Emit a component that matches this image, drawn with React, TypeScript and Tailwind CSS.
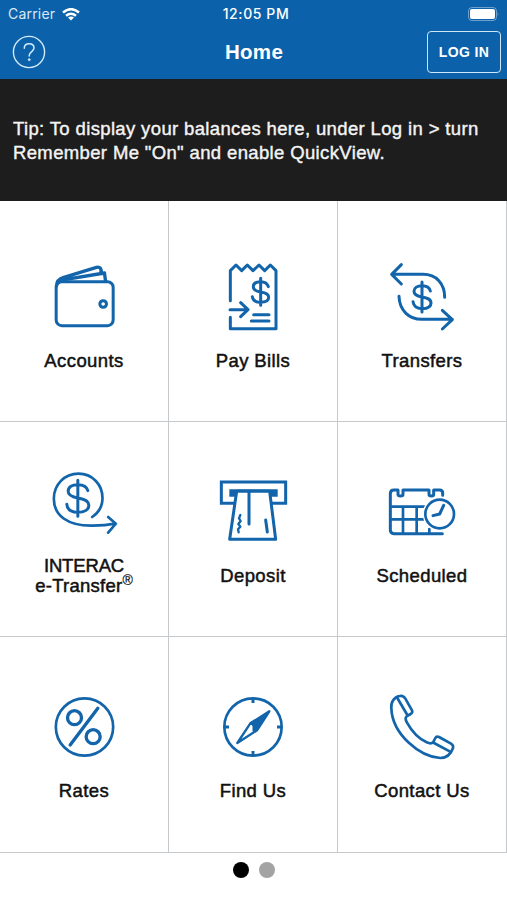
import type { ReactNode } from 'react';

const helv = "font-['Liberation_Sans',Arial,sans-serif]";

function Icon({ box, children }: { box: string; children: ReactNode }) {
  return (
    <svg
      viewBox={box}
      className="block h-20 w-20 shrink-0"
      fill="none"
      stroke="#1264ab"
      strokeWidth="9"
      strokeLinecap="round"
      strokeLinejoin="round"
      aria-hidden="true"
    >
      {children}
    </svg>
  );
}

function Wallet() {
  return (
    <Icon box="42.5 6 240 240">
      <rect x="79" y="80" width="171" height="132" rx="17" />
      <circle cx="220" cy="147" r="10" />
      <path d="M80 93C80 79 88 71 102 67L200 37C210 34 216 41 213 52M90 76L224 54L227 78" strokeWidth="10" />
    </Icon>
  );
}

function Bill() {
  return (
    <Icon box="54 6 240 240">
      <path d="M106 137V47L123 30L140 47L157 30L174 47L192 30L209 47L226 30L243 47V221H106V187" />
      <path d="M105 164H159M137 143L159 164L137 185M176 179H222M169 198H222" />
      <path d="M197 70V151M220 95C217 84 209 80 197 80C184 80 175 85 175 95C175 106 185 109 197 111C211 113 221 116 221 127C221 137 211 142 197 142C183 142 174 137 172 125" />
    </Icon>
  );
}

function Transfers() {
  return (
    <Icon box="51 6 240 240">
      <path d="M109 29L80 58L109 87M81 58H174C214 58 239 86 239 127" />
      <path d="M102 124C103 166 132 193 170 193H262M232 166L262 194L232 222" />
      <path d="M171 81V171M196 108C193 96 184 92 171 92C157 92 147 98 147 109C147 121 158 124 171 126C187 129 198 132 198 144C198 156 186 161 171 161C156 161 146 155 144 140" />
    </Icon>
  );
}

function ETransfer() {
  return (
    <Icon box="57.5 15 240 240">
      <path d="M202 156C223 142 233 123 233 99C233 58 202 26 161 26C119 26 87 59 87 101C87 151 127 183 203 182C229 182 251 180 271 176M250 156L273 176L250 203" strokeWidth="8" />
      <path d="M159 46V154M189 77C186 65 176 59 159 59C142 59 130 66 130 79C130 92 142 96 159 99C179 102 192 107 192 121C192 135 178 142 159 142C140 142 128 135 126 118" />
    </Icon>
  );
}

function Deposit() {
  return (
    <Icon box="54 15 240 240">
      <path d="M121 115H79V51H272V115H230" strokeLinejoin="miter" />
      <path d="M103 73H248V95H103Z" fill="#1264ab" stroke="none" />
      <path d="M125 79H224L242 223H104Z" fill="white" />
      <path d="M162 80V177" />
      <path d="M212 165L217 201" />
      <path d="M136 150L132 160L137 168L130 177L136 185L129 193L131 202" strokeWidth="7" />
    </Icon>
  );
}

function Scheduled() {
  return (
    <Icon box="51 15 240 240">
      <path d="M233 91V84Q233 75 224 75H206V88Q206 93 199 93Q192 93 192 88V75H114V88Q114 93 107 93Q99 93 99 88V75H87Q76 75 76 86V195Q76 206 87 206H232" />
      <path d="M78 125H178M78 163H178M114 127V204M155 127V204M193 192V204" strokeWidth="8" />
      <circle cx="224" cy="147" r="51" fill="white" stroke="none" />
      <circle cx="224" cy="147" r="43" strokeWidth="8" />
      <path d="M236 121L224 147L204 152" />
    </Icon>
  );
}

function Rates() {
  return (
    <Icon box="42.5 6 240 240">
      <circle cx="164" cy="126" r="86" strokeWidth="8" />
      <circle cx="134" cy="98" r="21" strokeWidth="10" />
      <circle cx="190" cy="155" r="21" strokeWidth="10" />
      <path d="M204 70L121 180" strokeWidth="10" />
    </Icon>
  );
}

function Compass() {
  return (
    <Icon box="54 6 240 240">
      <circle cx="174" cy="126" r="86" strokeWidth="8" />
      <path d="M174 41V54M174 198V211M89 126H102M246 126H259" strokeLinecap="butt" />
      <path d="M223 79L166 115L127 174L186 136Z" strokeWidth="7" />
      <path d="M223 79L166 115L174 123V139L186 136Z" fill="#1264ab" strokeWidth="3" />
    </Icon>
  );
}

function Phone() {
  return (
    <Icon box="51 6 240 240">
      <path d="M79 70C77 51 87 36 104 33C112 31 117 34 121 41L141 76Q144 82 137 87L126 93C120 97 121 104 126 113C142 142 163 162 185 172C194 176 202 177 206 169L211 159Q214 153 222 156L258 176Q266 181 264 189C257 209 244 219 226 219C165 216 82 148 79 70Z" strokeWidth="8" />
      <path d="M97 39L127 90M207 174L254 199" strokeWidth="8" />
    </Icon>
  );
}

function Tile({ icon, children, className }: { icon: ReactNode; children: ReactNode; className: string }) {
  return (
    <button type="button" className={`flex flex-col items-center border-r border-b border-[#c6c9cc] ${className}`}>
      {icon}
      <span
        className={`${helv} flex h-12 shrink-0 flex-col items-center justify-center text-[18.5px] leading-5 tracking-[0.4px] whitespace-nowrap text-[#111] [-webkit-text-stroke:0.5px_#111]`}
      >
        {children}
      </span>
    </button>
  );
}

export default function App() {
  return (
    <div className={`${helv} flex h-[900px] w-[507px] flex-col overflow-hidden bg-white`}>
      <header className="h-[79px] shrink-0 bg-[#0c62aa] text-white">
        <div className="grid h-7 grid-cols-3 items-center pr-2 pl-2 font-['Inter',sans-serif] text-[14px] leading-none">
          <div className="flex items-center gap-[7px] text-[#d8e9f7]">
            <span className="tracking-[0.2px]">Carrier</span>
            <svg viewBox="0 0 18 13" className="h-[13px] w-[18px]" fill="none" stroke="#fff" strokeWidth="2.5" aria-hidden="true">
              <path d="M1 4.5Q9-2.2 17 4.5M4 7.8Q9 3.7 14 7.8" />
              <path d="M9 12.5L6 9.6Q9 7.2 12 9.6Z" fill="#fff" stroke="none" />
            </svg>
          </div>
          <span className="pl-[5px] text-center font-medium tracking-[0.6px] whitespace-nowrap">12:05 PM</span>
          <svg viewBox="0 0 32 14" className="h-[14px] w-8 justify-self-end" aria-hidden="true">
            <rect x="1.5" y=".5" width="28" height="13" rx="3.5" fill="none" stroke="#fff" strokeOpacity=".4" />
            <rect x="3" y="2" width="25" height="10" rx="2" fill="#fff" />
            <path d="M30.7 5Q32 7 30.7 9Z" fill="#fff" fillOpacity=".5" />
          </svg>
        </div>
        <div className="flex h-12 items-center justify-between pr-1.5 pl-3">
          <button type="button" aria-label="Help" className="w-[74px]">
            <svg viewBox="0 0 34 34" className="h-[34px] w-[34px]" fill="none" stroke="#d3eafb" strokeLinecap="round" aria-hidden="true">
              <circle cx="17" cy="17" r="15.6" strokeWidth="1.4" />
              <path d="M12.3 13.3C12.3 10.5 14.2 8.8 17.1 8.8C20 8.8 22 10.5 22 13.1C22 16.5 17.2 16.7 17.2 20.5V21" strokeWidth="1.5" />
              <circle cx="17.2" cy="24.7" r="1.1" fill="#d3eafb" strokeWidth=".5" />
            </svg>
          </button>
          <h1 className="pr-[5px] text-[20.5px] font-bold tracking-[0.3px]">Home</h1>
          <button
            type="button"
            className="h-[42px] w-[74px] rounded border-[1.5px] border-[#cfe6f8] text-[14px] font-bold tracking-[0.4px] whitespace-nowrap"
          >
            LOG IN
          </button>
        </div>
      </header>
      <section className="flex h-[122px] shrink-0 items-center bg-[#1d1d1d] px-[13px] pt-px">
        <p className="text-[18.5px] leading-6 tracking-[0.36px] whitespace-nowrap text-[#f4f4f4] [-webkit-text-stroke:0.4px_#f4f4f4]">
          Tip: To display your balances here, under Log in &gt; turn
          <br />
          Remember Me "On" and enable QuickView.
        </p>
      </section>
      <main className="grid shrink-0 grid-cols-[169px_169px_169px] grid-rows-[221px_215px_216px]">
        <Tile icon={<Wallet />} className="pt-14">Accounts</Tile>
        <Tile icon={<Bill />} className="pt-14">Pay Bills</Tile>
        <Tile icon={<Transfers />} className="pt-14">Transfers</Tile>
        <Tile icon={<ETransfer />} className="pt-12 [&>span]:h-[52px]">
          <span className="tracking-[-0.15px]">INTERAC</span>
          <span className="tracking-[0.25px]">
            e-Transfer<sup className="relative -top-[7px] text-[14px] leading-none tracking-normal [-webkit-text-stroke:0.2px_#111]">®</sup>
          </span>
        </Tile>
        <Tile icon={<Deposit />} className="pt-12 [&>span]:h-[52px]">Deposit</Tile>
        <Tile icon={<Scheduled />} className="pt-12 [&>span]:h-[52px]">Scheduled</Tile>
        <Tile icon={<Rates />} className="pt-[50px]">Rates</Tile>
        <Tile icon={<Compass />} className="pt-[50px]">Find Us</Tile>
        <Tile icon={<Phone />} className="pt-[50px]">Contact Us</Tile>
      </main>
      <nav className="flex justify-center gap-2.5 pt-[9px]" aria-label="Pages">
        <span className="h-4 w-4 rounded-full bg-black" />
        <span className="h-4 w-4 rounded-full bg-[#a3a3a3]" />
      </nav>
    </div>
  );
}
